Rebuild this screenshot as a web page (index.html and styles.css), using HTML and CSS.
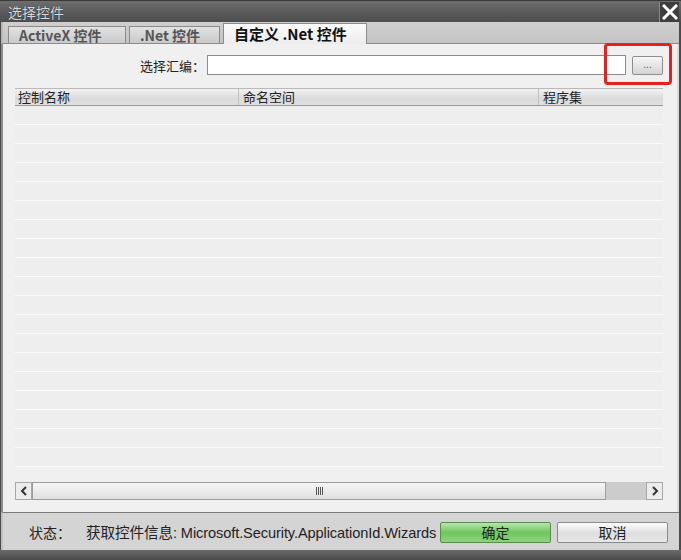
FILE: index.html
```html
<!DOCTYPE html>
<html lang="zh">
<head>
<meta charset="utf-8">
<title>选择控件</title>
<link rel="stylesheet" href="styles.css">
</head>
<body>
<div class="window">
  <div class="titlebar">
    <span class="title">选择控件</span>
    <span class="close">
      <svg width="16" height="16" viewBox="0 0 16 16"><path d="M2 2 L14 14 M14 2 L2 14" stroke="#fff" stroke-width="3" stroke-linecap="square"/></svg>
    </span>
  </div>
  <div class="tabbar">
    <div class="tab">ActiveX 控件</div>
    <div class="tab tab-net">.Net 控件</div>
    <div class="tab active">自定义 .Net 控件</div>
  </div>
  <div class="content">
    <div class="pickrow">
      <label class="picklabel">选择汇编：</label>
      <input class="pickinput" type="text">
      <div class="highlight">
        <button class="browse">...</button>
      </div>
    </div>
    <div class="list">
      <div class="header">
        <div class="col c1">控制名称</div>
        <div class="col c2">命名空间</div>
        <div class="col c3">程序集</div>
      </div>
      <div class="rows">
        <div class="row"></div><div class="row"></div><div class="row"></div><div class="row"></div>
        <div class="row"></div><div class="row"></div><div class="row"></div><div class="row"></div>
        <div class="row"></div><div class="row"></div><div class="row"></div><div class="row"></div>
        <div class="row"></div><div class="row"></div><div class="row"></div><div class="row"></div>
        <div class="row"></div><div class="row"></div><div class="row"></div>
      </div>
      <div class="hscroll">
        <div class="arrow">
          <svg width="8" height="10" viewBox="0 0 8 10"><path d="M6 1 L2 5 L6 9" stroke="#333" stroke-width="2" fill="none"/></svg>
        </div>
        <div class="thumb"><span class="grip"></span></div>
        <div class="track"></div>
        <div class="arrow">
          <svg width="8" height="10" viewBox="0 0 8 10"><path d="M2 1 L6 5 L2 9" stroke="#333" stroke-width="2" fill="none"/></svg>
        </div>
      </div>
    </div>
  </div>
  <div class="statusbar">
    <span class="status-label">状态：</span>
    <span class="status-text">获取控件信息: Microsoft.Security.ApplicationId.Wizards</span>
    <button class="btn ok">确定</button>
    <button class="btn cancel">取消</button>
  </div>
  <div class="bottomedge"></div>
</div>
</body>
</html>
```
FILE: styles.css
```css
*, *::before, *::after { box-sizing: border-box; }
html, body { margin: 0; padding: 0; background: #fff; }
body { font-family: "Liberation Sans", "Noto Sans CJK SC", sans-serif; }

.window {
  width: 681px;
  height: 560px;
  background: #4a4a4a;
  display: flex;
  flex-direction: column;
  padding: 0 2px 0 1px;
}

.titlebar {
  height: 22px;
  flex: none;
  background: linear-gradient(#6e6e6e, #585858 60%, #4e4e4e);
  display: flex;
  align-items: center;
  justify-content: space-between;
  margin: 0 -2px 0 -1px;
  padding: 0 2px 0 8px;
  border-top: 1px solid #3a3a3a;
}
.title {
  color: #d8d8d8;
  font-size: 14px;
  font-family: "Noto Sans CJK SC", sans-serif;
  text-shadow: 0 0 1px #222;
  line-height: 20px;
}
.close {
  width: 20px;
  height: 20px;
  background: #3e3e3e;
  border-left: 1px solid #888;
  display: flex;
  align-items: center;
  justify-content: center;
}

.tabbar {
  height: 22px;
  flex: none;
  background: linear-gradient(#cfcfcf, #c4c4c4);
  border-left: 2px solid #b8b8b8;
  display: flex;
  align-items: flex-end;
  padding-left: 5px;
  gap: 3px;
  border-bottom: 1px solid #8c8c8c;
}
.tab {
  height: 17px;
  width: 118px;
  background: linear-gradient(#e2e2e2, #cacaca);
  border: 1px solid #8a8a8a;
  border-bottom: none;
  color: #555;
  font-weight: bold;
  font-size: 14px;
  line-height: 16px;
  padding-left: 10px;
  font-family: "Noto Sans CJK SC", sans-serif;
}
.tab-net { width: 91px; }
.tab.active {
  height: 21px;
  width: 144px;
  background: linear-gradient(#fbfbfb, #ececec);
  color: #111;
  font-size: 15px;
  line-height: 20px;
  margin-bottom: -1px;
  padding-left: 10px;
}

.content {
  flex: 1;
  background: #f0f0f0;
  border-left: 2px solid #8c8c8c;
  border-right: 2px solid #dcdcdc;
  display: flex;
  flex-direction: column;
  padding: 10px 12px 12px 12px;
}

.pickrow {
  display: flex;
  align-items: center;
  height: 22px;
  margin-bottom: 12px;
}
.picklabel {
  width: 192px;
  text-align: right;
  font-family: "Noto Sans CJK SC", sans-serif;
  font-size: 13px;
  color: #222;
  padding-right: 2px;
}
.pickinput {
  width: 419px;
  height: 20px;
  border: 1px solid #8c8c8c;
  background: #fff;
  margin: 0;
}
.highlight {
  position: relative;
  width: 37px;
  height: 22px;
  display: flex;
  align-items: center;
  justify-content: flex-end;
}
.highlight::before {
  content: "";
  position: absolute;
  left: -22px;
  top: -11px;
  width: 68px;
  height: 42px;
  border: 3px solid #e8201e;
  border-radius: 4px;
}
.browse {
  width: 31px;
  height: 19px;
  padding: 0;
  margin: 0;
  border: 1px solid #8e8e8e;
  background: linear-gradient(#f6f6f6, #d4d4d4);
  color: #555;
  font-size: 10px;
  line-height: 10px;
  border-radius: 2px;
}

.list {
  flex: 1;
  display: flex;
  flex-direction: column;
  width: 648px;
}
.header {
  display: flex;
  height: 18px;
  border-top: 1px solid #b9b9b9;
  border-bottom: 1px solid #9a9a9a;
  background: linear-gradient(#f2f2f2, #dadada 60%, #e0e0e0);
}
.col {
  font-family: "Noto Sans CJK SC", sans-serif;
  font-size: 13px;
  color: #222;
  line-height: 16px;
  padding-left: 3px;
}
.c1 { width: 224px; border-right: 1px solid #c2c2c2; }
.c2 { width: 300px; border-right: 1px solid #c2c2c2; padding-left: 4px; }
.c3 { flex: 1; padding-left: 4px; }

.rows {
  flex: 1;
  overflow: hidden;
}
.row {
  height: 19px;
  background: #eeeeee;
  border-bottom: 1px solid #fbfbfb;
}

.hscroll {
  height: 18px;
  display: flex;
  flex: none;
  margin-top: 1px;
}
.arrow {
  width: 17px;
  height: 18px;
  border: 1px solid #a8a8a8;
  background: #ececec;
  display: flex;
  align-items: center;
  justify-content: center;
}
.thumb {
  width: 574px;
  border: 1px solid #9c9c9c;
  background: linear-gradient(#f6f6f6, #e0e0e0);
  display: flex;
  align-items: center;
  justify-content: center;
}
.grip {
  width: 7px;
  height: 8px;
  background: repeating-linear-gradient(90deg, #555 0 1px, transparent 1px 2px);
}
.track {
  flex: 1;
  background: #cccccc;
}

.statusbar {
  height: 38px;
  flex: none;
  background: #d4d4d4;
  border-top: 1px solid #7a7a7a;
  border-left: 2px solid #c0c0c0;
  display: flex;
  align-items: center;
  padding: 0 11px 0 26px;
}
.status-label {
  font-family: "Noto Sans CJK SC", sans-serif;
  font-size: 14px;
  color: #222;
  width: 57px;
  flex: none;
}
.status-text {
  font-size: 14.6px;
  color: #222;
  white-space: nowrap;
  letter-spacing: -0.1px;
}
.btn {
  height: 21px;
  width: 111px;
  flex: none;
  margin: 1px 0 0 0;
  font-family: "Noto Sans CJK SC", sans-serif;
  font-size: 14px;
  line-height: 17px;
  color: #222;
  padding: 0;
  border-radius: 2px;
}
.ok {
  margin-left: auto;
  border: 1px solid #5a8a4e;
  background: linear-gradient(#b8e6ac, #6ec65e 50%, #8dd47e);
}
.cancel {
  margin-left: 6px;
  border: 1px solid #8a8a8a;
  background: linear-gradient(#fcfcfc, #dedede 55%, #e8e8e8);
}
.bottomedge {
  height: 10px;
  flex: none;
  background: linear-gradient(#6a6a6a, #4a4a4a);
  margin: 0 -2px 0 -1px;
}
```
